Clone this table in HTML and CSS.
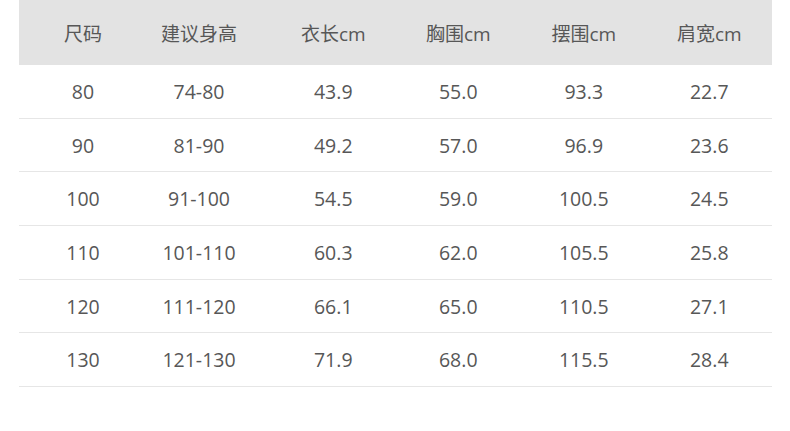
FILE: index.html
```html
<!DOCTYPE html>
<html lang="zh">
<head>
<meta charset="utf-8">
<title>尺码表</title>
<link rel="stylesheet" href="styles.css">
</head>
<body>
<div class="size-table">
  <div class="row head">
    <div class="cell c1">尺码</div>
    <div class="cell c2">建议身高</div>
    <div class="cell c3">衣长cm</div>
    <div class="cell">胸围cm</div>
    <div class="cell">摆围cm</div>
    <div class="cell">肩宽cm</div>
  </div>
  <div class="row">
    <div class="cell c1">80</div><div class="cell c2">74-80</div><div class="cell c3">43.9</div><div class="cell">55.0</div><div class="cell">93.3</div><div class="cell">22.7</div>
  </div>
  <div class="row">
    <div class="cell c1">90</div><div class="cell c2">81-90</div><div class="cell c3">49.2</div><div class="cell">57.0</div><div class="cell">96.9</div><div class="cell">23.6</div>
  </div>
  <div class="row">
    <div class="cell c1">100</div><div class="cell c2">91-100</div><div class="cell c3">54.5</div><div class="cell">59.0</div><div class="cell">100.5</div><div class="cell">24.5</div>
  </div>
  <div class="row">
    <div class="cell c1">110</div><div class="cell c2">101-110</div><div class="cell c3">60.3</div><div class="cell">62.0</div><div class="cell">105.5</div><div class="cell">25.8</div>
  </div>
  <div class="row">
    <div class="cell c1">120</div><div class="cell c2">111-120</div><div class="cell c3">66.1</div><div class="cell">65.0</div><div class="cell">110.5</div><div class="cell">27.1</div>
  </div>
  <div class="row">
    <div class="cell c1">130</div><div class="cell c2">121-130</div><div class="cell c3">71.9</div><div class="cell">68.0</div><div class="cell">115.5</div><div class="cell">28.4</div>
  </div>
</div>
</body>
</html>
```

FILE: styles.css
```css
html, body {
  margin: 0;
  padding: 0;
  background: #ffffff;
}
body {
  font-family: "Open Sans", "Noto Sans CJK SC", sans-serif;
  color: #575757;
  font-size: 19.5px;
}
.size-table {
  margin-left: 19px;
  width: 753px;
}
.row {
  display: grid;
  grid-template-columns: 119px 125px 132.5px 125.5px 125.5px 125.5px;
  box-sizing: border-box;
  height: 53.7px;
  border-bottom: 1px solid #e6e6e6;
  align-items: center;
}
.row.head {
  height: 65px;
  background: #e3e3e3;
  border-bottom: none;
  font-size: 19px;
}
.cell {
  text-align: center;
  white-space: nowrap;
}
.c1 { padding-left: 9px; }
.c2 { padding-right: 3px; }
.c3 { padding-left: 8px; }
```
